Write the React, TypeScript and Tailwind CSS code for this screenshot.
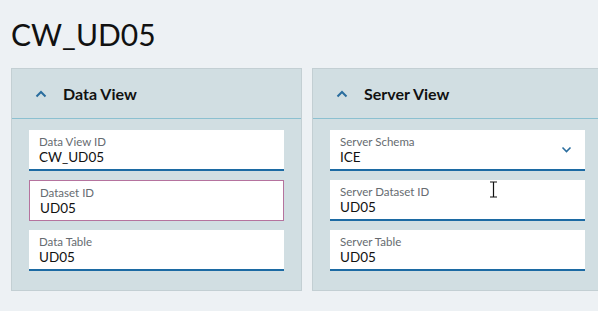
import React from "react";

const ChevUp = () => (
  <svg width="12" height="8" viewBox="0 0 12 8" className="shrink-0">
    <path d="M1.5 6.5 L6 2 L10.5 6.5" fill="none" stroke="#2a6d9e" strokeWidth="2" />
  </svg>
);

const ChevDown = () => (
  <svg width="11" height="7" viewBox="0 0 11 7">
    <path d="M1.5 1.5 L5.5 5.5 L9.5 1.5" fill="none" stroke="#2a6d9e" strokeWidth="1.6" />
  </svg>
);

function Field({ label, value, error, select }: { label: string; value: string; error?: boolean; select?: boolean }) {
  return (
    <div
      className={
        "relative h-[41px] bg-white pl-[10px] pr-3 flex flex-col justify-center " +
        (error ? "border border-[#b5739e]" : "border-b-2 border-[#1c6aa3]")
      }
    >
      <div className="text-[11.5px] leading-[15px] text-[#666b70] mt-[1px]">{label}</div>
      <div className="text-[13.5px] leading-[17px] text-[#111]">{value}</div>
      {select && (
        <div className="absolute right-[13px] top-[16px]">
          <ChevDown />
        </div>
      )}
    </div>
  );
}

function Panel({ title, children }: { title: string; children: React.ReactNode }) {
  return (
    <div className="w-[291px] shrink-0 bg-[#d1dee2] border border-[#c3cfd3]">
      <div className="h-[50px] flex items-center pl-[23px] gap-[16px] border-b border-[#8cc0d0]">
        <ChevUp />
        <span className="text-[16px] font-bold text-[#111]">{title}</span>
      </div>
      <div className="px-[17px] pt-[11px] pb-[19px] flex flex-col gap-[9px]">{children}</div>
    </div>
  );
}

export default function App() {
  return (
    <div
      className="w-[598px] h-[311px] bg-[#edf1f4] overflow-hidden relative"
      style={{ fontFamily: "Lato, 'Liberation Sans', sans-serif" }}
    >
      <h1 className="pl-[11px] pt-[14px] text-[30px] leading-[40px] text-[#111] font-normal">CW_UD05</h1>
      <div className="flex gap-[10px] pl-[11px] mt-[14px]">
        <Panel title="Data View">
          <Field label="Data View ID" value="CW_UD05" />
          <Field label="Dataset ID" value="UD05" error />
          <Field label="Data Table" value="UD05" />
        </Panel>
        <Panel title="Server View">
          <Field label="Server Schema" value="ICE" select />
          <Field label="Server Dataset ID" value="UD05" />
          <Field label="Server Table" value="UD05" />
        </Panel>
      </div>
      <svg className="absolute left-[489px] top-[181px]" width="9" height="17" viewBox="0 0 9 17">
        <path d="M1 1 H8 M4.5 1 V16 M1 16 H8" stroke="#111" strokeWidth="1.2" fill="none" />
      </svg>
    </div>
  );
}
